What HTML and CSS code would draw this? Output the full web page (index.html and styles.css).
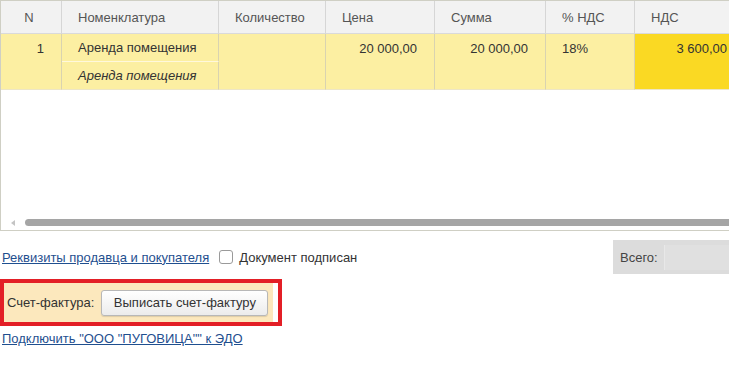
FILE: index.html
```html
<!DOCTYPE html>
<html>
<head>
    <title>Счет-фактура</title>
    <link rel="stylesheet" href="styles.css">
</head>
<body>
    <div class="grid-frame">
        <div class="grid">
            <div class="cell head">N</div>
            <div class="cell head">Номенклатура</div>
            <div class="cell head">Количество</div>
            <div class="cell head">Цена</div>
            <div class="cell head">Сумма</div>
            <div class="cell head">% НДС</div>
            <div class="cell head">НДС</div>

            <div class="cell row num span2">1</div>
            <div class="cell row first">Аренда помещения</div>
            <div class="cell row span2"></div>
            <div class="cell row num span2">20 000,00</div>
            <div class="cell row num span2">20 000,00</div>
            <div class="cell row span2">18%</div>
            <div class="cell row num span2 current">3 600,00</div>
            <div class="cell row sub">Аренда помещения</div>
        </div>
        <div class="hscroll">
            <span class="arrow"></span>
            <div class="thumb"></div>
        </div>
    </div>

    <div class="links-row">
        <a href="#" class="link">Реквизиты продавца и покупателя</a>
        <label class="check">
            <span class="box"></span>
            Документ подписан
        </label>
        <div class="total">
            <span class="total-label">Всего:</span>
            <span class="total-field"></span>
        </div>
    </div>

    <div class="invoice-frame">
        <div class="invoice">
            <span class="invoice-label">Счет-фактура:</span>
            <button class="invoice-btn">Выписать счет-фактуру</button>
        </div>
    </div>

    <a href="#" class="link edo">Подключить "ООО "ПУГОВИЦА"" к ЭДО</a>
</body>
</html>
```

FILE: styles.css
```css
body {
    margin: 0;
    font-family: "Liberation Sans", Arial, sans-serif;
    font-size: 13px;
    color: #333;
    background-color: white;
}
.grid-frame {
    box-sizing: border-box;
    height: 231px;
    border: 1px solid #cfcfc4;
    border-right: none;
    display: flex;
    flex-direction: column;
    overflow: hidden;
}
.grid {
    display: grid;
    grid-template-columns: 61px 157px 107px 109px 111px 89px 110px;
    grid-template-rows: 33px 28px 28px;
    width: 744px;
}
.cell {
    box-sizing: border-box;
    padding: 0 17px 0 16px;
    display: flex;
    align-items: center;
    white-space: nowrap;
    border-right: 1px solid #d6d6d6;
}
.head {
    background-color: #f2f2f2;
    color: #555;
    border-bottom: 1px solid #dadada;
}
.head:first-child {
    justify-content: center;
    padding: 0 4px 0 0;
}
.row {
    background-color: #fcefa2;
    border-right-color: #d9d3b0;
}
.span2 {
    grid-row: span 2;
    align-items: flex-start;
    padding-top: 7px;
    border-bottom: 1px solid #ede6c6;
}
.num {
    justify-content: flex-end;
}
.first {
    border-bottom: 1px solid #fff8dc;
}
.sub {
    grid-column: 2;
    font-style: italic;
    border-bottom: 1px solid #ede6c6;
}
.current {
    background-color: #fad923;
}
.hscroll {
    margin-top: auto;
    margin-bottom: 4px;
    height: 7px;
    display: flex;
    align-items: center;
}
.arrow {
    width: 0;
    height: 0;
    margin-left: 10px;
    border-top: 3px solid transparent;
    border-bottom: 3px solid transparent;
    border-right: 4px solid #c4c4c4;
}
.thumb {
    flex: 1;
    height: 7px;
    margin-left: 10px;
    background-color: #a5a5a5;
    border-radius: 4px 0 0 4px;
}
.links-row {
    margin-top: 9px;
    height: 34px;
    display: flex;
    align-items: center;
}
.link {
    color: #1f4f8f;
    text-decoration: underline;
    margin-left: 2px;
}
.check {
    display: flex;
    align-items: center;
    margin-left: 10px;
    color: #333;
}
.box {
    box-sizing: border-box;
    width: 14px;
    height: 14px;
    border: 1px solid #9a9a9a;
    border-radius: 3px;
    background-color: white;
    margin-right: 6px;
}
.total {
    margin-left: auto;
    width: 116px;
    height: 34px;
    background-color: #dcdcdc;
    display: flex;
    align-items: center;
}
.total-label {
    margin-left: 7px;
    color: #444;
}
.total-field {
    flex: 1;
    height: 25px;
    margin-left: 6px;
    background-color: #e0e0e0;
    border-left: 1px solid #e8e8e8;
}
.invoice-frame {
    margin-top: 5px;
    width: 282px;
    box-sizing: border-box;
    border: 4px solid #e31f26;
    padding-right: 5px;
}
.invoice {
    height: 39px;
    background-color: #fce8bd;
    display: flex;
    align-items: center;
    padding-left: 3px;
}
.invoice-label {
    color: #333;
}
.invoice-btn {
    margin-left: 7px;
    width: 167px;
    height: 26px;
    font-family: "Liberation Sans", Arial, sans-serif;
    font-size: 13px;
    color: #333;
    background: linear-gradient(#ffffff, #ececec);
    border: 1px solid #b8b8b8;
    border-radius: 3px;
    box-shadow: 0 1px 1px rgba(0, 0, 0, 0.12);
    padding: 0;
}
.edo {
    display: inline-block;
    margin-top: 5px;
}
```
